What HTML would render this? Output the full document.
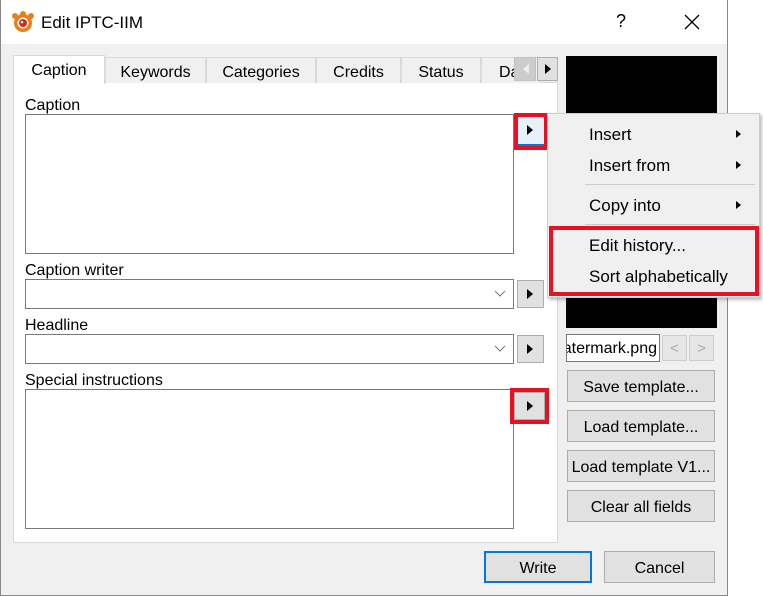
<!DOCTYPE html>
<html><head><style>
*{margin:0;padding:0;box-sizing:border-box}
body{width:763px;height:596px;background:#fff;position:relative;overflow:hidden;font-family:"Liberation Sans",sans-serif;font-size:15px;color:#000}
.a{position:absolute}
.win{left:0;top:0;width:728px;height:596px;border:1px solid #888;border-top:none;background:#f0f0f0}
.title{left:1px;top:0;width:726px;height:44px;background:#fff}
.box{background:#fff;border:1px solid #7a7a7a}
.btn{background:#e1e1e1;border:1px solid #adadad;text-align:center}
.tab{top:57px;height:26px;background:#f0f0f0;border:1px solid #d9d9d9;border-bottom:none;text-align:center;line-height:30px;font-size:16px}
.tri{width:0;height:0;border-top:5px solid transparent;border-bottom:5px solid transparent;border-left:6px solid #000;position:absolute}
.red{border:4px solid #e81123}
.mi{left:589px}
.sm{width:0;height:0;border-top:4px solid transparent;border-bottom:4px solid transparent;border-left:5px solid #000;left:736px}
.lb{font-size:16px}
</style></head><body>
<div class="a win"></div>
<div class="a title"></div>
<svg class="a" style="left:11px;top:11px" width="24" height="22" viewBox="0 0 24 22"><g fill="#e8801a"><circle cx="12" cy="12" r="9"/><circle cx="4" cy="5" r="3"/><circle cx="12" cy="3" r="3"/><circle cx="20" cy="5" r="3"/></g><circle cx="12" cy="12" r="5.5" fill="#fff"/><circle cx="12" cy="12" r="4" fill="#d62a1a"/><circle cx="11" cy="11" r="1.3" fill="#fff"/></svg>
<div class="a" style="left:41px;top:13px;font-size:17px">Edit IPTC-IIM</div>
<div class="a" style="left:616px;top:11px;font-size:18px">?</div>
<svg class="a" style="left:684px;top:14px" width="16" height="16"><path d="M1 1L15 15M15 1L1 15" stroke="#000" stroke-width="1.3"/></svg>
<div class="a" style="left:13px;top:82px;width:545px;height:461px;background:#fff;border:1px solid #d9d9d9"></div>
<div class="a tab" style="left:105px;width:101px">Keywords</div>
<div class="a tab" style="left:206px;width:110px">Categories</div>
<div class="a tab" style="left:316px;width:85px">Credits</div>
<div class="a tab" style="left:401px;width:80px">Status</div>
<div class="a tab" style="left:481px;width:60px;text-align:left;padding-left:17px;overflow:hidden">Da</div>
<div class="a" style="left:13px;top:55px;width:92px;height:29px;background:#fff;border:1px solid #d9d9d9;border-bottom:none;text-align:center;line-height:30px;font-size:16px">Caption</div>
<div class="a btn" style="left:514px;top:57px;width:22px;height:24px;background:#ccc;border-color:#c0c0c0"><div class="tri" style="left:8px;top:6px;border-left:none;border-right:6px solid #eee"></div></div>
<div class="a btn" style="left:537px;top:57px;width:21px;height:24px"><div class="tri" style="left:7px;top:6px"></div></div>
<div class="a lb" style="left:25px;top:97px">Caption</div>
<div class="a box" style="left:25px;top:114px;width:489px;height:140px"></div>
<div class="a red" style="left:514px;top:113px;width:34px;height:37px"></div>
<div class="a" style="left:518px;top:117px;width:26px;height:29px;background:#e5f1fb;border-bottom:2px solid #0078d7"><div class="tri" style="left:9px;top:8px"></div></div>
<div class="a lb" style="left:25px;top:262px">Caption writer</div>
<div class="a box" style="left:25px;top:279px;width:489px;height:30px"></div>
<svg class="a" style="left:494px;top:290px" width="12" height="8"><path d="M1 1L6 6L11 1" stroke="#777" fill="none"/></svg>
<div class="a btn" style="left:517px;top:280px;width:27px;height:28px"><div class="tri" style="left:9px;top:8px"></div></div>
<div class="a lb" style="left:25px;top:317px">Headline</div>
<div class="a box" style="left:25px;top:334px;width:489px;height:30px"></div>
<svg class="a" style="left:494px;top:345px" width="12" height="8"><path d="M1 1L6 6L11 1" stroke="#777" fill="none"/></svg>
<div class="a btn" style="left:517px;top:335px;width:27px;height:28px"><div class="tri" style="left:9px;top:8px"></div></div>
<div class="a lb" style="left:25px;top:372px">Special instructions</div>
<div class="a box" style="left:25px;top:389px;width:489px;height:140px"></div>
<div class="a red" style="left:510px;top:388px;width:39px;height:36px"></div>
<div class="a btn" style="left:514px;top:392px;width:31px;height:28px"><div class="tri" style="left:12px;top:8px"></div></div>
<div class="a" style="left:566px;top:56px;width:151px;height:272px;background:#000"></div>
<div class="a box" style="left:566px;top:334px;width:94px;height:28px;overflow:hidden;line-height:28px;border-color:#7a7a7a"><span style="position:absolute;right:2px;white-space:nowrap;font-size:16px">watermark.png</span></div>
<div class="a btn" style="left:662px;top:335px;width:25px;height:26px;color:#aaa;border-color:#ccc;background:#e6e6e6;line-height:26px">&lt;</div>
<div class="a btn" style="left:689px;top:335px;width:25px;height:26px;color:#aaa;border-color:#ccc;background:#e6e6e6;line-height:26px">&gt;</div>
<div class="a btn" style="left:567px;top:370px;width:148px;height:32px;line-height:33px;font-size:16px">Save template...</div>
<div class="a btn" style="left:567px;top:410px;width:148px;height:32px;line-height:33px;font-size:16px">Load template...</div>
<div class="a btn" style="left:567px;top:450px;width:148px;height:32px;line-height:33px;font-size:16px">Load template V1...</div>
<div class="a btn" style="left:567px;top:490px;width:148px;height:32px;line-height:33px;font-size:16px">Clear all fields</div>
<div class="a btn" style="left:484px;top:551px;width:108px;height:32px;line-height:31px;font-size:16px;border:2px solid #0078d7">Write</div>
<div class="a btn" style="left:604px;top:551px;width:111px;height:32px;line-height:33px;font-size:16px">Cancel</div>
<div class="a" style="left:547px;top:113px;width:213px;height:185px;background:#f0f0f0;border:1px solid #ccc;box-shadow:2px 2px 3px rgba(0,0,0,.25)"></div>
<div class="a mi" style="top:125px;font-size:17px">Insert</div><div class="a sm" style="top:130px"></div>
<div class="a mi" style="top:156px;font-size:17px">Insert from</div><div class="a sm" style="top:161px"></div>
<div class="a" style="left:585px;top:184px;width:170px;height:1px;background:#ccc"></div>
<div class="a mi" style="top:196px;font-size:17px">Copy into</div><div class="a sm" style="top:201px"></div>
<div class="a" style="left:585px;top:224px;width:170px;height:1px;background:#ccc"></div>
<div class="a mi" style="top:236px;font-size:17px">Edit history...</div>
<div class="a mi" style="top:267px;font-size:17px">Sort alphabetically</div>
<div class="a red" style="left:549px;top:226px;width:210px;height:70px"></div>
</body></html>
